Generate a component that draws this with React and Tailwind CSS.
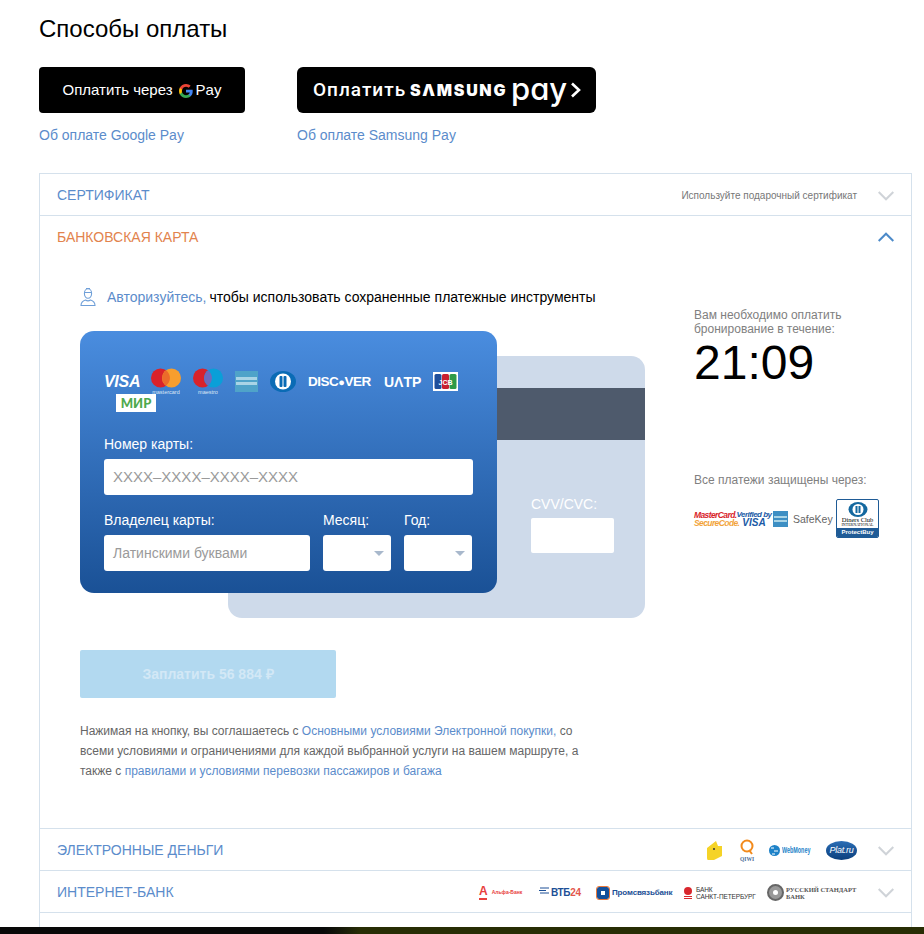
const sans = { fontFamily: '"Liberation Sans", Arial, sans-serif' };

function Chevron({ up, color = "#cfd3d8" }) {
  return (
    <svg width="16" height="10" viewBox="0 0 16 10" fill="none" className="block shrink-0">
      <path d={up ? "M0.700 9 L8 1.700 L15.300 9" : "M0.700 1 L8 8.300 L15.300 1"} stroke={color} strokeWidth="2" />
    </svg>
  );
}

function Row({ title, children }) {
  return (
    <div className="flex h-[42px] items-center border-b border-[#d5e1ec] px-[17px] pt-[2px]">
      <span className="text-[14px] text-[#5b8ccb]">{title}</span>
      <div className="ml-auto flex items-center">{children}</div>
      <div className="ml-[21px]">
        <Chevron />
      </div>
    </div>
  );
}

function GooglePayButton() {
  return (
    <div className="flex h-[46px] w-[206px] items-center justify-center rounded-[4px] bg-black pt-[1px] text-[15px] text-white">
      <span>Оплатить через</span>
      <svg width="14" height="14" viewBox="0 0 24 24" className="ml-[6px] mr-[3px]">
        <path fill="#4285F4" d="M23.500 12.300c0-.9-.1-1.700-.2-2.500H12v4.700h6.500c-.3 1.500-1.100 2.800-2.400 3.600v3h3.900c2.200-2.100 3.500-5.100 3.500-8.800z" />
        <path fill="#34A853" d="M12 24c3.200 0 6-1.100 8-2.900l-3.900-3c-1.100.7-2.500 1.200-4.100 1.200-3.100 0-5.800-2.100-6.700-5H1.300v3.100C3.300 21.300 7.300 24 12 24z" />
        <path fill="#FBBC05" d="M5.300 14.300c-.5-1.500-.5-3.100 0-4.600V6.600h-4c-1.700 3.300-1.700 7.500 0 10.800l4-3.100z" />
        <path fill="#EA4335" d="M12 4.800c1.800 0 3.300.6 4.600 1.800l3.400-3.400C18 1.200 15.200 0 12 0 7.300 0 3.300 2.700 1.300 6.600l4 3.100c1-2.900 3.600-4.900 6.700-4.900z" />
      </svg>
      <span>Pay</span>
    </div>
  );
}

function SamsungPayButton() {
  return (
    <div className="flex h-[46px] w-[299px] items-center rounded-[6px] bg-black pl-[16px] text-white">
      <span className="w-[97px] text-[19px] font-medium tracking-[1px] [font-family:Roboto,sans-serif]">Оплатить</span>
      <span className="w-[101px] whitespace-nowrap text-[16px] font-black tracking-[1.700px] [font-family:Inter,sans-serif]">SΛMSUNG</span>
      <span className="relative -top-[2px] w-[59px] whitespace-nowrap text-[31px] font-medium leading-none [font-family:Inter,sans-serif]">pɑy</span>
      <svg width="11" height="16" viewBox="0 0 11 16" fill="none">
        <path d="M2 1.500 L9 8 L2 14.500" stroke="white" strokeWidth="2.600" />
      </svg>
    </div>
  );
}

function UserIcon() {
  return (
    <svg width="16" height="20" viewBox="0 0 16 20" fill="none" stroke="#6f9fd8" strokeWidth="1.100">
      <ellipse cx="8" cy="6.500" rx="3.600" ry="4.700" />
      <path d="M4.500 5.500h7M6 1.500h4" />
      <path d="M1 18.500c0-3.500 3-5 4.500-5.500 1.500 1 3.500 1 5 0 1.500.5 4.500 2 4.500 5.500z" />
    </svg>
  );
}

function CardLogos() {
  return (
    <div className="flex w-[369px] flex-wrap items-center gap-x-[12px] text-white">
      <span className="w-[35px] whitespace-nowrap text-[16px] font-bold italic leading-[24px] tracking-[-0.3px]">VISA</span>
      <svg width="30" height="27" viewBox="0 0 30 27">
        <circle cx="9.500" cy="10" r="9.500" fill="#d9222a" />
        <circle cx="20.500" cy="10" r="9.500" fill="#f79e2d" />
        <path d="M15 2.300a9.500 9.500 0 0 1 0 15.400 9.500 9.500 0 0 1 0-15.400z" fill="#ec6b2a" />
        <text x="15" y="26" fontSize="5.500" fill="#dbe7f5" textAnchor="middle" fontFamily="Liberation Sans">mastercard</text>
      </svg>
      <svg width="30" height="27" viewBox="0 0 30 27">
        <circle cx="9.500" cy="10" r="9.500" fill="#d9222a" />
        <circle cx="20.500" cy="10" r="9.500" fill="#0a9fd8" />
        <path d="M15 2.300a9.500 9.500 0 0 1 0 15.400 9.500 9.500 0 0 1 0-15.400z" fill="#6c6bbd" />
        <text x="15" y="26" fontSize="5.500" fill="#dbe7f5" textAnchor="middle" fontFamily="Liberation Sans">maestro</text>
      </svg>
      <svg width="23" height="21" viewBox="0 0 23 21">
        <rect width="23" height="21" fill="#4fa3c9" />
        <rect x="1" y="6" width="21" height="3" fill="#a9d4e6" />
        <rect x="1" y="11" width="21" height="3" fill="#a9d4e6" />
      </svg>
      <svg width="26" height="21" viewBox="0 0 26 21">
        <ellipse cx="13" cy="10.500" rx="13" ry="10.500" fill="#0a6bb5" />
        <circle cx="13" cy="10.500" r="8" fill="white" />
        <rect x="9.500" y="5" width="3" height="11" rx="1" fill="#0a6bb5" />
        <rect x="13.500" y="5" width="3" height="11" rx="1" fill="#0a6bb5" />
      </svg>
      <span className="w-[64px] whitespace-nowrap text-[13.500px] font-bold leading-[24px] tracking-[-0.5px]">DISC<span className="text-[11px]">●</span>VER</span>
      <span className="w-[37px] whitespace-nowrap text-[14px] font-bold leading-[24px]">UΛTP</span>
      <svg width="25" height="19" viewBox="0 0 25 19">
        <rect width="25" height="19" fill="white" />
        <rect x="1.500" y="2" width="7" height="15" rx="1.500" fill="#1e4f9c" />
        <rect x="9" y="2" width="7" height="15" rx="1.500" fill="#c8202f" />
        <rect x="16.500" y="2" width="7" height="15" rx="1.500" fill="#2f9a48" />
        <text x="12.500" y="12.500" fontSize="7" fontWeight="bold" fill="white" textAnchor="middle" fontFamily="Liberation Sans">JCB</text>
      </svg>
      <div className="-mt-[1px] ml-[12px] flex h-[18px] w-[40px] items-center justify-center bg-white text-[13px] font-black leading-none text-[#4ea94e] [font-family:Lato,sans-serif]">МИР</div>
    </div>
  );
}

function Field({ className = "", children }) {
  return (
    <div className={`flex h-[36px] items-center rounded-[3px] bg-white pl-[9px] text-[14px] text-[#9a9a9a] ${className}`}>
      {children}
    </div>
  );
}

function Select({ className = "" }) {
  return (
    <Field className={`justify-end pr-[7px] ${className}`}>
      <div className="h-0 w-0 border-x-[5px] border-t-[5px] border-x-transparent border-t-[#a8b8cc]" />
    </Field>
  );
}

function CardForm() {
  return (
    <div className="relative h-[287px] w-[565px]">
      {/* back of the card sits under the front */}
      <div className="absolute left-[148px] top-[25px] h-[262px] w-[417px] rounded-[14px] bg-[#cedaea]">
        <div className="mt-[32px] h-[52px] bg-[#4e5a6c]" />
        <div className="ml-[303px] mt-[55px] text-[14px] leading-[18px] text-white">CVV/CVC:</div>
        <div className="ml-[303px] mt-[5px] h-[35px] w-[83px] rounded-[2px] bg-white" />
      </div>
      <div className="absolute left-0 top-0 flex h-[262px] w-[417px] flex-col rounded-[14px] bg-gradient-to-b from-[#4a8ddf] to-[#1a5196] px-[24px] pt-[37px]">
        <CardLogos />
        <div className="mt-[23px] text-[14px] leading-[18px] text-white">Номер карты:</div>
        <Field className="mt-[6px] w-[369px] text-[15px]">XXXX–XXXX–XXXX–XXXX</Field>
        <div className="mt-[16px] flex text-[14px] leading-[18px] text-white">
          <div className="w-[219px]">Владелец карты:</div>
          <div className="w-[81px]">Месяц:</div>
          <div>Год:</div>
        </div>
        <div className="mt-[6px] flex">
          <Field className="w-[206px]">Латинскими буквами</Field>
          <Select className="ml-[13px] w-[68px]" />
          <Select className="ml-[13px] w-[68px]" />
        </div>
      </div>
    </div>
  );
}

function SecureLogos() {
  return (
    <div className="mt-[12px] flex items-start">
      <div className="mt-[12px] w-[42px] whitespace-nowrap text-[8.500px] font-bold italic leading-[8px] tracking-[-0.6px]">
        <div className="text-[#d8232a]">MasterCard.</div>
        <div className="text-[#f2a33a]">SecureCode.</div>
      </div>
      <div className="mt-[12px] w-[36px] text-center font-bold italic text-[#1a5aa6]">
        <div className="whitespace-nowrap text-[8px] leading-[8px] tracking-[-0.5px]">Verified by</div>
        <div className="text-[10px] leading-[8px]">VISA</div>
      </div>
      <svg width="15" height="16" viewBox="0 0 15 16" className="ml-[1px] mt-[12px]">
        <rect width="15" height="16" fill="#3d8fc4" />
        <rect x="1" y="5" width="13" height="2" fill="#a9d4e6" />
        <rect x="1" y="9" width="13" height="2" fill="#a9d4e6" />
      </svg>
      <span className="ml-[5px] mt-[12px] w-[43px] text-[10.500px] leading-[16px] text-[#666]">SafeKey</span>
      <div className="flex h-[39px] w-[43px] flex-col items-center overflow-hidden rounded-[2px] border border-[#1f5b96]">
        <svg width="20" height="15" viewBox="0 0 20 15" className="mt-[2px]">
          <ellipse cx="10" cy="7.500" rx="9.500" ry="7.500" fill="#14689f" />
          <circle cx="10" cy="7.500" r="5.500" fill="white" />
          <rect x="7.500" y="4" width="2" height="7" fill="#14689f" />
          <rect x="10.500" y="4" width="2" height="7" fill="#14689f" />
        </svg>
        <div className="whitespace-nowrap text-[6.500px] leading-[6px] text-black [font-family:'Liberation_Serif',serif]">Diners Club</div>
        <div className="whitespace-nowrap text-[4px] leading-[4px] text-black [font-family:'Liberation_Serif',serif]">INTERNATIONAL</div>
        <div className="mt-auto w-full bg-[#1f5b96] text-center text-[6px] font-bold leading-[9px] text-white">ProtectBuy</div>
      </div>
    </div>
  );
}

function EMoneyLogos() {
  return (
    <div className="flex items-center">
      <svg width="16" height="19" viewBox="0 0 16 19">
        <path d="M1 7 L10 0 L12 5 L16 5 V15 L8 19 H2 Q1 19 1 17z" fill="#f5d327" />
        <circle cx="8" cy="8" r="1" fill="#333" />
      </svg>
      <div className="ml-[17px] flex w-[16px] flex-col items-center">
        <svg width="14" height="17" viewBox="0 0 14 17" fill="none">
          <circle cx="7" cy="7" r="5.500" stroke="#f28a1c" strokeWidth="2" />
          <path d="M9 11 L12 15" stroke="#f28a1c" strokeWidth="2" />
        </svg>
        <span className="whitespace-nowrap text-[5.500px] font-bold leading-[6px] text-[#4a6a96] [font-family:'Liberation_Serif',serif]">QIWI</span>
      </div>
      <svg width="11" height="13" viewBox="0 0 11 13" className="ml-[14px]">
        <circle cx="5.500" cy="6.500" r="5.500" fill="#1e82c8" />
        <path d="M2 4h3M5 7h4M3 10h3" stroke="white" />
      </svg>
      <div className="ml-[2px] w-[29px]">
        <div className="origin-left scale-x-[0.6] whitespace-nowrap text-[9px] font-bold leading-none text-[#1e82c8]">WebMoney</div>
      </div>
      <div className="ml-[15px] flex h-[19px] w-[31px] items-center justify-center rounded-[50%] bg-gradient-to-b from-[#2a6db5] to-[#0a3f7c] text-[9px] italic tracking-[-0.3px] text-white">Plat.ru</div>
    </div>
  );
}

function BankLogos() {
  return (
    <div className="flex items-center">
      <div className="flex w-[44px] items-center text-[#e8403d]">
        <div className="flex flex-col items-center">
          <span className="text-[12px] font-bold leading-[11px]">А</span>
          <div className="mt-[1px] h-[2px] w-[8px] bg-[#e8403d]" />
        </div>
        <span className="ml-[4px] whitespace-nowrap text-[5px] font-bold">Альфа-Банк</span>
      </div>
      <div className="ml-[16px] flex w-[41px] items-center text-[10px] font-bold leading-none tracking-[-0.3px] text-[#1c4f96]">
        <svg width="11" height="7" viewBox="0 0 11 7" className="-mt-[5px] mr-[1px] shrink-0">
          <path d="M1 1h9M0 3.500h7M1 6h9" stroke="#1c4f96" />
        </svg>
        ВТБ<span className="text-[#e2574c]">24</span>
      </div>
      <div className="ml-[17px] flex w-[73px] items-center">
        <div className="flex h-[12px] w-[12px] shrink-0 items-center justify-center rounded-[2px] bg-[#14509a] outline outline-1 outline-[#e8783a]">
          <div className="h-[4px] w-[4px] bg-white" />
        </div>
        <span className="ml-[3px] whitespace-nowrap text-[8px] font-bold tracking-[-0.15px] text-[#1c4f96]">Промсвязьбанк</span>
      </div>
      <div className="ml-[14px] flex w-[69px] items-center">
        <div className="flex shrink-0 flex-col items-center">
          <div className="h-[8px] w-[8px] rounded-full bg-[#d9272e]" />
          <div className="mt-[1px] h-[1px] w-[8px] bg-[#d9272e]" />
          <div className="mt-[1px] h-[1px] w-[8px] bg-[#d9272e]" />
        </div>
        <div className="ml-[4px] text-[6.500px] leading-[7px] tracking-[-0.1px] text-[#333]">
          <div>БАНК</div>
          <div className="whitespace-nowrap">САНКТ-ПЕТЕРБУРГ</div>
        </div>
      </div>
      <div className="ml-[14px] flex w-[90px] items-center">
        <div className="flex h-[17px] w-[17px] shrink-0 items-center justify-center rounded-full border-[2px] border-[#666] bg-[#999]">
          <div className="h-[5px] w-[5px] rounded-full bg-white" />
        </div>
        <div className="ml-[2px] text-[6.500px] font-bold leading-[7px] text-[#555] [font-family:'Liberation_Serif',serif]">
          <div className="whitespace-nowrap">РУССКИЙ СТАНДАРТ</div>
          <div>БАНК</div>
        </div>
      </div>
    </div>
  );
}

export default function App() {
  return (
    <div style={sans} className="flex h-[934px] w-[924px] flex-col overflow-hidden bg-white">
      <div className="min-h-0 flex-1 pl-[39px] pr-[12px]">
        <h1 className="pt-[15px] text-[24px] leading-[28px] text-black">Способы оплаты</h1>
        <div className="mt-[24px] flex gap-[52px] text-[14px] text-[#5b8ccb]">
          <div>
            <GooglePayButton />
            <div className="mt-[14px] leading-[16px]">Об оплате Google Pay</div>
          </div>
          <div>
            <SamsungPayButton />
            <div className="mt-[14px] leading-[16px]">Об оплате Samsung Pay</div>
          </div>
        </div>

        <div className="mt-[30px] h-[800px] border-x border-t border-[#d5e1ec]">
          <Row title="СЕРТИФИКАТ">
            <span className="text-[10px] text-[#777]">Используйте подарочный сертификат</span>
          </Row>
          <div className="h-[613px] border-b border-[#d5e1ec]">
            <div className="flex h-[42px] items-center px-[17px]">
              <span className="text-[14px] text-[#e2834d]">БАНКОВСКАЯ КАРТА</span>
              <div className="ml-auto">
                <Chevron up color="#4c8ac9" />
              </div>
            </div>
            <div className="flex pl-[40px]">
              <div className="w-[614px]">
                <div className="mt-[29px] flex items-center text-[14px] leading-[20px]">
                  <UserIcon />
                  <span className="ml-[11px] text-[#5b8ccb]">Авторизуйтесь,</span>
                  <span className="ml-[3px] text-black">чтобы использовать сохраненные платежные инструменты</span>
                </div>
                <div className="mt-[24px]">
                  <CardForm />
                </div>
                <div className="mt-[32px] flex h-[48px] w-[256px] items-center justify-center rounded-[2px] bg-[#b2d9f0] text-[14px] font-bold text-[#d3e8f6]">
                  Заплатить 56 884 ₽
                </div>
                <p className="mt-[23px] w-[510px] text-[12px] leading-[20px] text-[#666]">
                  Нажимая на кнопку, вы соглашаетесь с <span className="text-[#5b8ccb]">Основными условиями Электронной покупки,</span> со всеми условиями и ограничениями для каждой выбранной услуги на вашем маршруте, а также с <span className="text-[#5b8ccb]">правилами и условиями перевозки пассажиров и багажа</span>
                </p>
              </div>
              <div className="pt-[50px]">
                <p className="w-[170px] text-[12px] leading-[14px] text-[#808080]">Вам необходимо оплатить бронирование в течение:</p>
                <div className="-mt-[1px] text-[48px] leading-[56px] text-black">21:09</div>
                <p className="mt-[82px] text-[12px] leading-[14px] text-[#808080]">Все платежи защищены через:</p>
                <SecureLogos />
              </div>
            </div>
          </div>
          <Row title="ЭЛЕКТРОННЫЕ ДЕНЬГИ">
            <EMoneyLogos />
          </Row>
          <Row title="ИНТЕРНЕТ-БАНК">
            <BankLogos />
          </Row>
        </div>
      </div>
      <div className="h-[7px] shrink-0 bg-gradient-to-r from-[#080808] from-[35%] to-[#282d04] to-[39%]" />
    </div>
  );
}
